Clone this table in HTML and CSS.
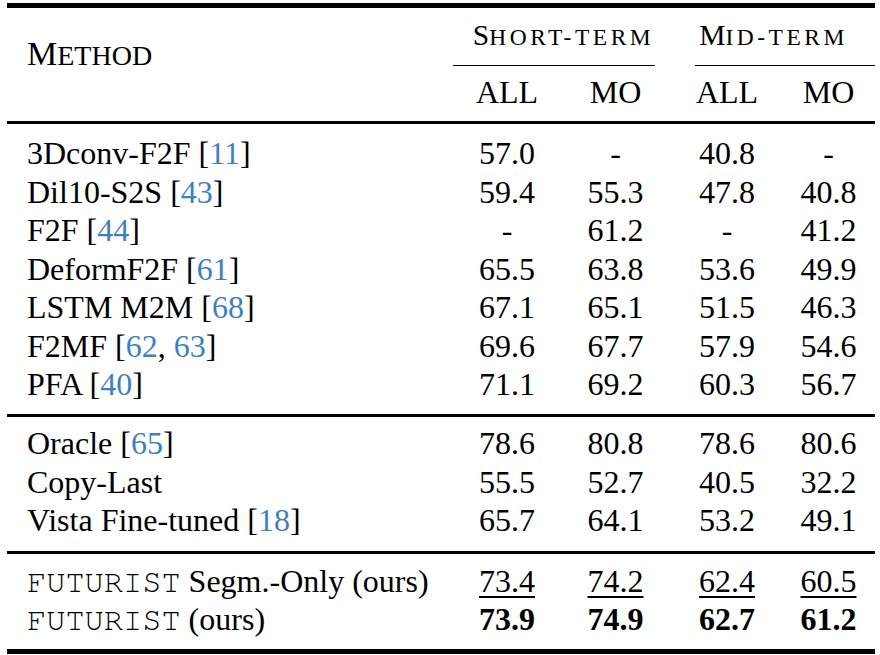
FILE: index.html
```html
<!DOCTYPE html>
<html>
<head>
<meta charset="utf-8">
<link rel="stylesheet" href="styles.css">
</head>
<body>
<div class="tbl">
  <div class="rule rule-heavy"></div>
  <div class="head">
    <div class="method"><span class="m-cap">M</span><span class="m-sc">ethod</span></div>
    <div class="group group-short">
      <div class="group-title"><span class="g-cap">S</span><span class="g-sc">hort-term</span></div>
      <div class="cmid cmid-short"></div>
    </div>
    <div class="group group-mid">
      <div class="group-title"><span class="g-cap">M</span><span class="g-sc">id-term</span></div>
      <div class="cmid cmid-mid"></div>
    </div>
    <div class="sub">ALL</div>
    <div class="sub">MO</div>
    <div class="sub">ALL</div>
    <div class="sub">MO</div>
  </div>
  <div class="rule rule-head"></div>

  <div class="sec sec-first">
    <div class="row"><div class="name">3Dconv-F2F [<span class="cite">11</span>]</div><div class="num">57.0</div><div class="num">-</div><div class="num">40.8</div><div class="num">-</div></div>
    <div class="row"><div class="name">Dil10-S2S [<span class="cite">43</span>]</div><div class="num">59.4</div><div class="num">55.3</div><div class="num">47.8</div><div class="num">40.8</div></div>
    <div class="row"><div class="name">F2F [<span class="cite">44</span>]</div><div class="num">-</div><div class="num">61.2</div><div class="num">-</div><div class="num">41.2</div></div>
    <div class="row"><div class="name">DeformF2F [<span class="cite">61</span>]</div><div class="num">65.5</div><div class="num">63.8</div><div class="num">53.6</div><div class="num">49.9</div></div>
    <div class="row"><div class="name">LSTM M2M [<span class="cite">68</span>]</div><div class="num">67.1</div><div class="num">65.1</div><div class="num">51.5</div><div class="num">46.3</div></div>
    <div class="row"><div class="name">F2MF [<span class="cite">62</span>, <span class="cite">63</span>]</div><div class="num">69.6</div><div class="num">67.7</div><div class="num">57.9</div><div class="num">54.6</div></div>
    <div class="row"><div class="name">PFA [<span class="cite">40</span>]</div><div class="num">71.1</div><div class="num">69.2</div><div class="num">60.3</div><div class="num">56.7</div></div>
  </div>
  <div class="rule rule-mid"></div>

  <div class="sec sec-second">
    <div class="row"><div class="name">Oracle [<span class="cite">65</span>]</div><div class="num">78.6</div><div class="num">80.8</div><div class="num">78.6</div><div class="num">80.6</div></div>
    <div class="row"><div class="name">Copy-Last</div><div class="num">55.5</div><div class="num">52.7</div><div class="num">40.5</div><div class="num">32.2</div></div>
    <div class="row"><div class="name">Vista Fine-tuned [<span class="cite">18</span>]</div><div class="num">65.7</div><div class="num">64.1</div><div class="num">53.2</div><div class="num">49.1</div></div>
  </div>
  <div class="rule rule-mid"></div>

  <div class="sec sec-third">
    <div class="row"><div class="name"><span class="mono">FUTURIST</span> Segm.-Only (ours)</div><div class="num"><span class="ul">73.4</span></div><div class="num"><span class="ul">74.2</span></div><div class="num"><span class="ul">62.4</span></div><div class="num"><span class="ul">60.5</span></div></div>
    <div class="row"><div class="name"><span class="mono">FUTURIST</span> (ours)</div><div class="num best">73.9</div><div class="num best">74.9</div><div class="num best">62.7</div><div class="num best">61.2</div></div>
  </div>
  <div class="rule rule-heavy"></div>
</div>
</body>
</html>
```
FILE: styles.css
```css
html, body {
  margin: 0;
  padding: 0;
  background: #ffffff;
}

body {
  font-family: "Liberation Serif", "Times New Roman", serif;
  font-size: 32px;
  color: #000000;
}

.tbl {
  margin: 3px 0 0 7px;
  width: 868px;
}

.rule {
  background: #000000;
}

.rule-heavy {
  height: 5px;
}

.rule-head {
  height: 3px;
}

.rule-mid {
  height: 3px;
}

.head {
  display: grid;
  grid-template-columns: 448px 104px 113px 110px 93px;
  grid-template-rows: 58px 55px;
  line-height: 38.5px;
}

.method {
  grid-row: 1 / 3;
  grid-column: 1;
  padding: 27px 0 0 20px;
  font-size: 34px;
  text-transform: uppercase;
}

.m-sc {
  font-size: 28px;
}

.group {
  display: flex;
  flex-direction: column;
  text-align: center;
}

.group-short {
  grid-column: 2 / 4;
}

.group-mid {
  grid-column: 4 / 6;
}

.group-title {
  padding-top: 7px;
  text-transform: uppercase;
  white-space: nowrap;
}

.g-cap {
  font-size: 29.5px;
}

.g-sc {
  font-size: 23.5px;
  letter-spacing: 3.5px;
}

.cmid {
  height: 1px;
  background: #000000;
  margin-top: auto;
}

.cmid-short {
  margin-left: -2px;
  margin-right: 17px;
}

.cmid-mid {
  margin-left: 23px;
}

.sub {
  grid-row: 2;
  padding-top: 7px;
  text-align: center;
}

.sec {
  display: flex;
  flex-direction: column;
}

.sec-first {
  padding: 10px 0 10.5px;
}

.sec-second {
  padding: 7px 0 11.5px;
}

.sec-third {
  padding: 7.5px 0 10px;
}

.row {
  display: grid;
  grid-template-columns: 448px 104px 113px 110px 93px;
  height: 38.5px;
  line-height: 38.5px;
}

.name {
  padding-left: 20px;
  white-space: nowrap;
}

.num {
  text-align: center;
  white-space: nowrap;
}

.cite {
  color: #3f7fc0;
}

.mono {
  font-family: "Nimbus Mono PS", "Nimbus Mono L", "FreeMono", "Courier", "Liberation Mono", "Courier New", monospace;
  font-size: 32px;
  color: #000000;
}

.ul {
  text-decoration: underline;
  text-decoration-thickness: 1.5px;
  text-underline-offset: 4px;
}

.best {
  font-weight: bold;
}
```
